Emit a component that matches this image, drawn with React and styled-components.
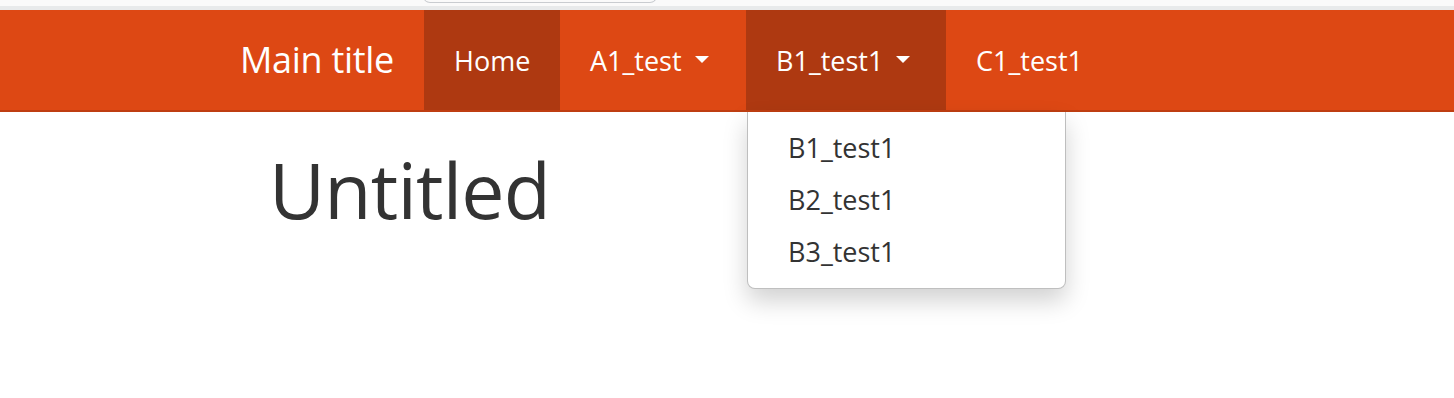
import React from "react";
import styled, { createGlobalStyle } from "styled-components";

const Global = createGlobalStyle`
  html, body { margin: 0; padding: 0; background: #fff; }
  body { font-family: "Open Sans", "Noto Sans", sans-serif; color: #333; }
  #root { min-height: 398px; }
`;

const TopStrip = styled.div`
  height: 6px;
  background: #fafafa;
  border-bottom: 4px solid #e8eaeb;
  position: relative;
`;

const TabEdge = styled.div`
  position: absolute;
  left: 423px;
  top: -6px;
  width: 232px;
  height: 8px;
  border: 1px solid #c9ccd0;
  border-top: none;
  border-radius: 0 0 7px 7px;
  background: #fafafa;
`;

const NavBar = styled.nav`
  display: flex;
  align-items: stretch;
  height: 100px;
  background: #dd4814;
  border-bottom: 2px solid #bf3e11;
  padding-left: 210px;
  color: #fff;
`;

const Brand = styled.a`
  display: block;
  padding: 0 30px;
  font-size: 36px;
  line-height: 100px;
  color: #fff;
  letter-spacing: -0.3px;
  width: 154px;
  white-space: nowrap;
`;

const NavItem = styled.div`
  position: relative;
  display: flex;
  align-items: center;
  padding: 0 30px;
  background: ${(p) => (p.$active ? "#ae3911" : "transparent")};
  font-size: 27px;
  color: #fff;
  white-space: nowrap;
  width: ${(p) => p.$w}px;
  box-sizing: border-box;
`;

const Caret = styled.span`
  display: inline-block;
  width: 0;
  height: 0;
  margin-left: 13px;
  border-top: 7px solid #fff;
  border-left: 7px solid transparent;
  border-right: 7px solid transparent;
  vertical-align: middle;
  transform: translateY(-1px);
`;

const Menu = styled.ul`
  position: absolute;
  top: 102px;
  left: 1px;
  width: 319px;
  box-sizing: border-box;
  margin: 0;
  padding: 10px 0;
  list-style: none;
  background: #fff;
  border: 1px solid rgba(0, 0, 0, 0.25);
  border-top: none;
  border-radius: 0 0 8px 8px;
  box-shadow: 0 12px 24px rgba(0, 0, 0, 0.18);
  z-index: 10;
`;

const MenuItem = styled.li`
  padding: 6px 40px;
  line-height: 40px;
  font-size: 27px;
  color: #333;
  white-space: nowrap;
`;

const Main = styled.main`
  padding: 28px 0 0 269px;
`;

const Title = styled.h1`
  margin: 0;
  font-size: 77px;
  font-weight: 400;
  line-height: 100px;
  color: #333;
  letter-spacing: -0.8px;
`;

export default function App() {
  return (
    <>
      <Global />
      <TopStrip>
        <TabEdge />
      </TopStrip>
      <NavBar>
        <Brand>Main title</Brand>
        <NavItem $active $w={136}>Home</NavItem>
        <NavItem $w={186}>
          A1_test
          <Caret />
        </NavItem>
        <NavItem $active $w={200}>
          B1_test1
          <Caret />
          <Menu>
            <MenuItem>B1_test1</MenuItem>
            <MenuItem>B2_test1</MenuItem>
            <MenuItem>B3_test1</MenuItem>
          </Menu>
        </NavItem>
        <NavItem $w={170}>C1_test1</NavItem>
      </NavBar>
      <Main>
        <Title>Untitled</Title>
      </Main>
    </>
  );
}
